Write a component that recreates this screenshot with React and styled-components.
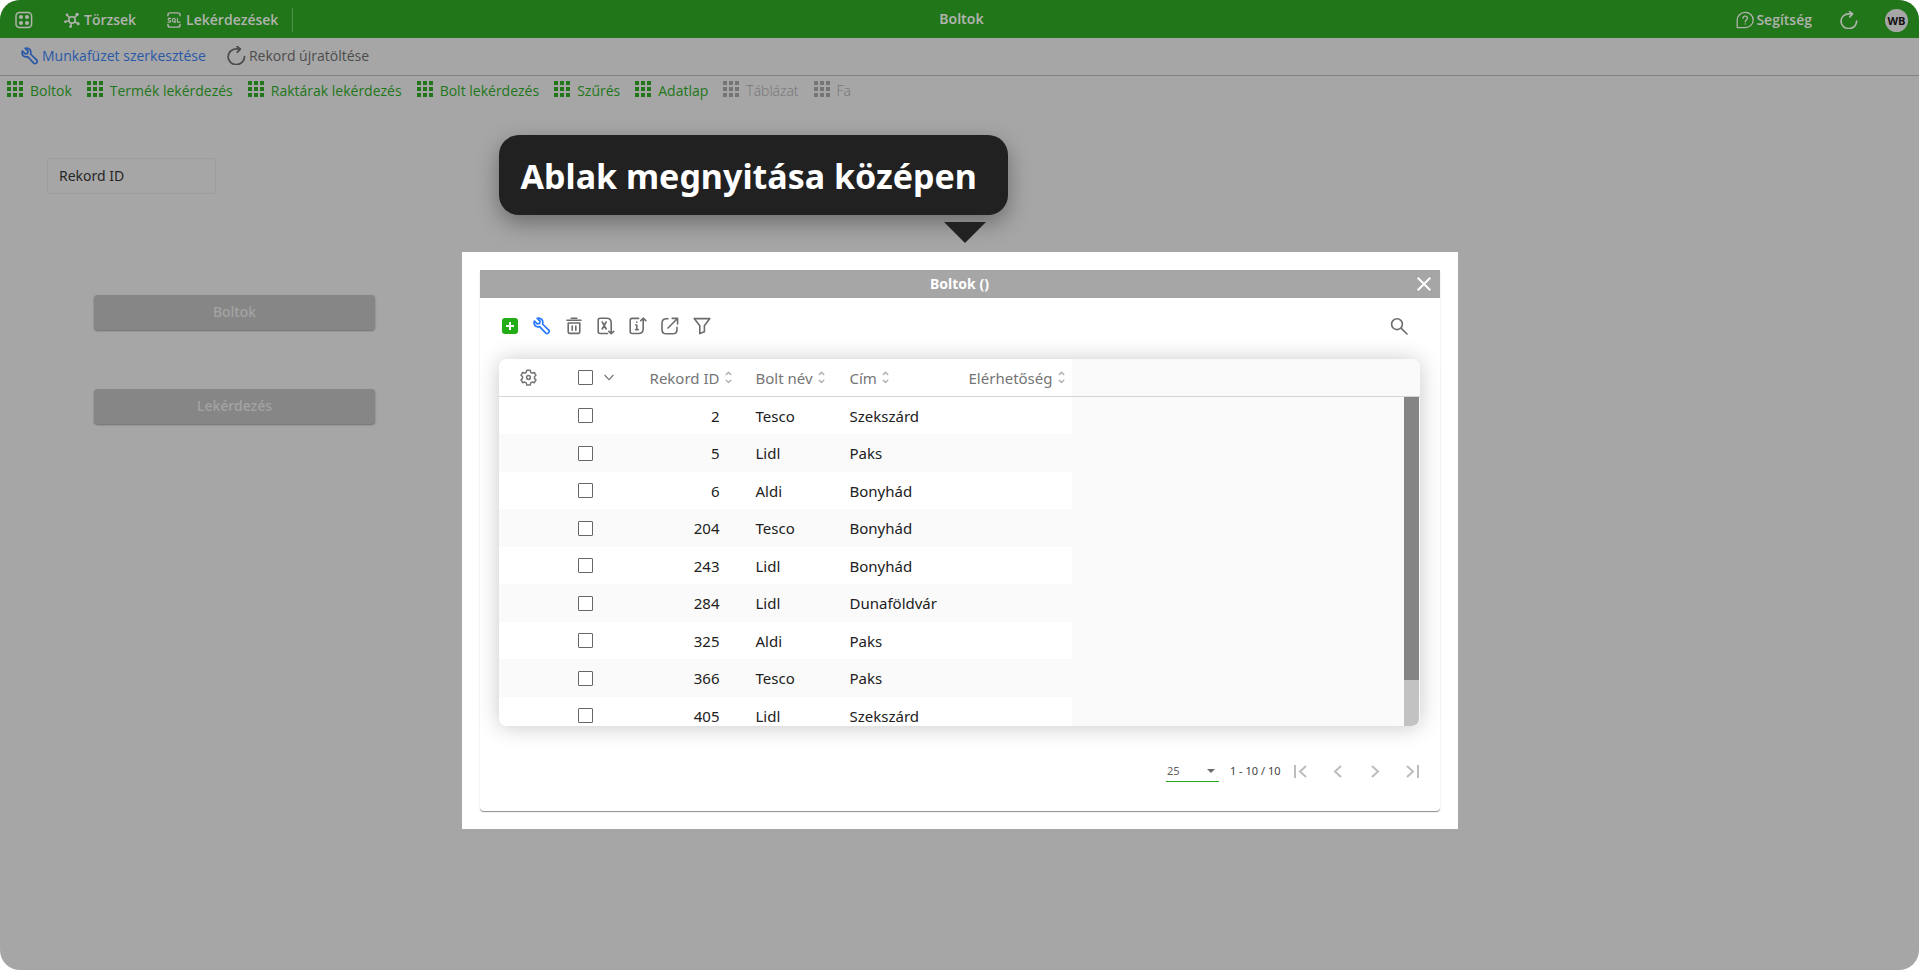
import React from "react";
import styled, { createGlobalStyle, css } from "styled-components";

const ui = '"Open Sans", "Noto Sans", sans-serif';
const rounded = '"Noto Sans", "Open Sans", sans-serif';

const GlobalStyle = createGlobalStyle`
  *, *::before, *::after { box-sizing: border-box; }
  body { margin: 0; background: #fff; font-family: ${ui}; }
  button, input, select { font-family: inherit; }
`;

const Page = styled.div`
  position: relative;
  min-height: 100vh;
  background: #a6a6a6;
  border-radius: 20px;
  overflow: hidden;
`;

const plainButton = css`
  display: flex;
  align-items: center;
  padding: 0;
  border: 0;
  background: none;
  cursor: pointer;
`;

/* ---------- top bar ---------- */

const TopBar = styled.header`
  display: grid;
  grid-template-columns: 1fr auto 1fr;
  align-items: center;
  height: 38px;
  padding: 0 11px 0 15px;
  background: #22761a;
  color: #b0b3ae;
`;

const TopGroup = styled.nav`
  display: flex;
  align-items: center;
  height: 38px;
  padding-top: 2px;
  justify-content: ${(p) => (p.$end ? "flex-end" : "flex-start")};
`;

const TopButton = styled.button`
  ${plainButton}
  gap: ${(p) => p.$gap || 4}px;
  margin-left: ${(p) => p.$space || 0}px;
  color: inherit;
  font-size: 14px;
  font-weight: 600;
  line-height: 20px;
  white-space: nowrap;
`;

const TopDivider = styled.span`
  width: 1px;
  height: 24px;
  margin-left: 14px;
  background: #4f9148;
`;

const PageTitle = styled.h1`
  margin: 0;
  font-family: ${rounded};
  font-size: 14px;
  font-weight: 600;
  line-height: 20px;
`;

const Avatar = styled.button`
  ${plainButton}
  justify-content: center;
  width: 23px;
  height: 23px;
  margin-left: 27px;
  border-radius: 50%;
  background: #a6a6a6;
  color: #111;
  font-size: 11px;
  font-weight: 700;
`;

/* ---------- action bar and tabs ---------- */

const ActionBar = styled.div`
  display: flex;
  align-items: center;
  gap: 21px;
  height: 38px;
  padding: 0 21px 2px;
  border-bottom: 1px solid #828282;
`;

const ActionButton = styled.button`
  ${plainButton}
  gap: 3px;
  color: ${(p) => p.$color};
  font-size: 14px;
  line-height: 20px;
`;

const Tabs = styled.nav`
  display: flex;
  gap: 15px;
  height: 32px;
  padding: 0 7px 3px;
`;

const Tab = styled.a`
  display: flex;
  align-items: center;
  gap: 7px;
  color: ${(p) => (p.$off ? "#757575" : "#22761a")};
  font-size: 14px;
  font-weight: ${(p) => (p.$off ? 300 : 400)};
  line-height: 20px;
  text-decoration: none;
  white-space: nowrap;
`;

/* ---------- form behind the dialog ---------- */

const Form = styled.main`
  display: flex;
  flex-direction: column;
  align-items: flex-start;
  padding: 50px 47px;
`;

const RecordInput = styled.input`
  width: 169px;
  height: 36px;
  margin-bottom: 101px;
  padding: 0 11px 2px;
  border: 1px solid #9c9c9c;
  border-radius: 4px;
  background: transparent;
  font-family: ${rounded};
  font-size: 14px;
  &::placeholder { color: #262626; opacity: 1; }
`;

const FormButton = styled.button`
  width: 281px;
  height: 35px;
  margin: 0 0 59px 47px;
  padding: 0 0 2px;
  border: 0;
  border-radius: 4px;
  background: #868686;
  box-shadow: 0 1px 2px rgba(0, 0, 0, 0.35);
  color: #a3a3a3;
  font-family: ${rounded};
  font-size: 14px;
  font-weight: 500;
`;

/* ---------- overlay ---------- */

const Overlay = styled.div`
  position: absolute;
  inset: 0;
  display: flex;
  flex-direction: column;
  align-items: center;
  padding-top: 135px;
`;

const Stack = styled.div`
  display: flex;
  flex-direction: column;
  width: 92%;
  max-width: 996px;
`;

const Callout = styled.div`
  align-self: flex-start;
  display: flex;
  align-items: center;
  height: 80px;
  margin-left: 37px;
  padding: 2px 31px 0 22px;
  border-radius: 20px;
  background: #212121;
  box-shadow: 0 8px 22px rgba(0, 0, 0, 0.35);
  color: #fff;
  font-family: ${rounded};
  font-size: 34px;
  font-weight: 700;
  line-height: 48px;
  white-space: nowrap;
`;

const Pointer = styled.svg`
  display: block;
  margin: 7px 0 9px 482px;
`;

const Frame = styled.div`
  padding: 18px;
  background: #fff;
`;

const Dialog = styled.section`
  border-radius: 0 0 4px 4px;
  background: #fff;
  box-shadow: 0 1px 1px rgba(0, 0, 0, 0.45);
  font-family: ${rounded};
`;

const DialogHeader = styled.header`
  display: grid;
  grid-template-columns: 1fr auto 1fr;
  align-items: center;
  height: 28px;
  padding: 0 9px;
  background: #a6a6a6;
  color: #fff;
`;

const DialogTitle = styled.h2`
  grid-column: 2;
  margin: 0;
  font-size: 14px;
  font-weight: 700;
  line-height: 20px;
`;

const IconButton = styled.button`
  ${plainButton}
  justify-content: center;
  color: ${(p) => p.$color || "#6c6c6c"};
`;

const CloseButton = styled(IconButton)`
  justify-self: end;
  color: #fff;
`;

const DialogBody = styled.div`
  padding: 17px 20px 0 19px;
`;

const Toolbar = styled.div`
  display: flex;
  align-items: center;
  gap: 10px;
  height: 22px;
  margin-bottom: 22px;
`;

const ToolButton = styled(IconButton)`
  width: 22px;
  height: 22px;
`;

const SearchButton = styled(ToolButton)`
  margin-left: auto;
  margin-right: 10px;
`;

/* ---------- record grid ---------- */

const GridCard = styled.div`
  position: relative;
  height: 367px;
  border-radius: 8px;
  background: #fafafa;
  box-shadow: 0 1px 22px rgba(0, 0, 0, 0.22);
  overflow: hidden;
`;

const Grid = styled.table`
  width: 100%;
  border-collapse: separate;
  border-spacing: 0;
  table-layout: fixed;
  color: #212121;
  font-size: 15px;
  line-height: 20px;
`;

const Col = styled.col`
  width: ${(p) => (p.$w ? `${p.$w}px` : "auto")};
`;

const HeadCell = styled.th`
  height: 38px;
  padding: 0 ${(p) => p.$right || 0}px 0 ${(p) => p.$left || 0}px;
  border-bottom: 1px solid #d6d6d6;
  background: ${(p) => (p.$blank ? "#fafafa" : "#fff")};
  color: #757575;
  font-weight: 400;
  text-align: ${(p) => p.$align || "left"};
  white-space: nowrap;
`;

const HeadLabel = styled.span`
  display: inline-flex;
  align-items: center;
  gap: 5px;
  vertical-align: middle;
`;

const Row = styled.tr`
  height: 37px;
  background: #fff;
  &:nth-child(even) { height: 38px; background: #fafafa; }
`;

const Cell = styled.td`
  padding: 0 ${(p) => p.$right || 0}px 0 ${(p) => p.$left || 0}px;
  background: ${(p) => (p.$blank ? "#fafafa" : "inherit")};
  text-align: ${(p) => p.$align || "left"};
`;

const Check = styled.input`
  appearance: none;
  display: block;
  width: 15px;
  height: 15px;
  margin: 0;
  border: 1px solid #666;
  border-radius: 1px;
  background: #fff;
`;

const CheckMenu = styled.span`
  display: flex;
  align-items: center;
  gap: 11px;
`;

const ScrollTrack = styled.div`
  position: absolute;
  top: 38px;
  right: 1px;
  bottom: 0;
  width: 15px;
  border-bottom-right-radius: 7px;
  background: #c2c2c2;
  overflow: hidden;
`;

const ScrollThumb = styled.div`
  height: 86%;
  background: #858585;
`;

/* ---------- pager ---------- */

const Pager = styled.footer`
  display: flex;
  align-items: center;
  justify-content: flex-end;
  height: 85px;
  padding-top: 5px;
  color: #444;
  font-size: 11px;
  line-height: 16px;
`;

const SizeBox = styled.label`
  display: flex;
  align-items: center;
  width: 53px;
  height: 22px;
  margin-right: 11px;
  border-bottom: 1px solid #22ac16;
  color: #6c6c6c;
`;

const SizeSelect = styled.select`
  appearance: none;
  flex: 1;
  min-width: 0;
  padding: 0 0 0 1px;
  border: 0;
  background: none;
  color: #616161;
  font-size: 11px;
`;

const PageButtons = styled.div`
  display: flex;
  gap: 13px;
  margin-left: 8px;
  margin-right: -4px;
`;

const PageButton = styled(IconButton)`
  color: #bdbdbd;
`;

/* ---------- icons ---------- */

const Icon = ({ size = 18, sw = 1.8, children, ...rest }) => (
  <svg width={size} height={size} viewBox="0 0 18 18" fill="none" stroke="currentColor"
    strokeWidth={sw} strokeLinecap="round" strokeLinejoin="round" aria-hidden="true" {...rest}>
    {children}
  </svg>
);

const AppsIcon = () => (
  <Icon sw={1.5}>
    <rect x="1" y="1.5" width="15.6" height="15" rx="3.5" />
    <g fill="currentColor" stroke="none">
      {[6, 12].map((x) => [6, 12].map((y) => <circle key={`${x}${y}`} cx={x} cy={y} r="2" />))}
    </g>
  </Icon>
);

const NodesIcon = () => (
  <Icon size={16} sw={1.7}>
    <circle cx="9" cy="9" r="3.6" />
    <path d="M6.3 6.4 3.6 3.6M11.6 6.4l2.6-2.6M5.4 10 2 10.8M12.2 11l3 1.7M8.3 12.8 7.6 16" />
    <g fill="currentColor" stroke="none">
      <circle cx="3.4" cy="3.2" r="1.5" /><circle cx="14.8" cy="2.6" r="1.8" />
      <circle cx="1.6" cy="11" r="1.5" /><circle cx="16" cy="13.2" r="1.7" /><circle cx="7.4" cy="16.4" r="1.5" />
    </g>
  </Icon>
);

const SqlIcon = () => (
  <Icon size={16} sw={1.6}>
    <path d="M2.2 4.2V3.4C2.2 1.8 3.2 1 4.8 1h8.4c1.6 0 2.6.8 2.6 2.4v.8M2.2 14v.6c0 1.6 1 2.4 2.6 2.4h8.4c1.6 0 2.6-.8 2.6-2.4V14" />
    <path strokeWidth="1.2" d="M5.4 7.2H3.6c-1.6 0-1.6 2 0 2h.5c1.6 0 1.6 2.2 0 2.2H2.2M8.9 7.2c-2.2 0-2.2 4.2 0 4.2s2.2-4.2 0-4.2M9.4 10.6l1.2 1.2M12.8 7v4.4h3" />
  </Icon>
);

const HelpIcon = () => (
  <Icon sw={1.3}>
    <path d="M1.2 16.6V9.2a8 7.6 0 1 1 8 7.4z" />
    <path d="M7 7.2c0-2.8 4.4-2.8 4.4 0 0 1.8-2.1 1.8-2.1 3.6M9.3 12.9v.1" />
  </Icon>
);

const ReloadIcon = ({ size = 18 }) => (
  <Icon size={size} sw={1.7}>
    <path d="M16.6 10A7.8 7.4 0 1 1 8.8 2.8h3M9.6.6l3 2.3-2.8 3" />
  </Icon>
);

const WrenchIcon = ({ size = 18, sw = 1.7 }) => (
  <Icon size={size} sw={sw}>
    <path d="M4.2 1.3 7 4.1 6.6 6.4 4.2 6.8 1.4 4C.6 6.6 1.6 9.2 4 9.8c1 .3 1.8.1 2.6-.2l6.2 6.5c1.5 1.5 4.6-1.2 3-2.9L9.5 7C10.8 3.4 7.8.3 4.2 1.3z" />
  </Icon>
);

const TilesIcon = () => (
  <svg width="16" height="20" viewBox="0 0 16 20" fill="currentColor" aria-hidden="true">
    {[0, 6, 12].map((x) => [0, 6, 12].map((y) => <rect key={`${x}-${y}`} x={x} y={y} width="4" height="4" />))}
  </svg>
);

const AddIcon = () => (
  <svg width="18" height="18" viewBox="0 0 18 18" aria-hidden="true">
    <rect x="1" y="1" width="16" height="16" rx="3" fill="#22ac16" />
    <path d="M9 5v8M5 9h8" stroke="#fff" strokeWidth="2" />
  </svg>
);

const TrashIcon = () => (
  <Icon sw={1.6}>
    <path d="M2 3.2h14M6.2 1.2h5.6M3.2 6h11.6v8.4c0 1.4-.6 2-2 2H5.2c-1.4 0-2-.6-2-2zM7.2 9v4.2M10.8 9v4.2" />
  </Icon>
);

const ExcelIcon = () => (
  <Icon sw={1.6}>
    <path d="M10.5 16.5H3.2c-1.4 0-2-.6-2-2V3.2c0-1.4.6-2 2-2h6.4c2.8 0 4.6 1.8 4.6 4.6v10.7M11.8 14.4l2.4 2.2 2.6-2.2M5.2 5l4 7M9.2 5l-4 7" />
  </Icon>
);

const InfoIcon = () => (
  <Icon sw={1.6}>
    <path d="M9.6 1.4H3.2c-1.4 0-2 .6-2 2v11.1c0 1.4.6 2 2 2h6.2c3 0 4.8-1.8 4.8-4.8V1.6M11.8 3.6l2.4-2.4 2.6 2.4M7.8 8v4.6M6.6 12.6h2.6M6.8 8h1M7.8 5v.2" />
  </Icon>
);

const ExportIcon = () => (
  <Icon sw={1.6}>
    <path d="M7 1.8H5.4C2.8 1.8 1 3.6 1 6.2v6.2c0 2.6 1.8 4.4 4.4 4.4h6.2c2.6 0 4.4-1.8 4.4-4.4v-2M11.2 1.4h5.4V7M16.2 1.8 7 11" />
  </Icon>
);

const FunnelIcon = () => (
  <Icon sw={1.6}>
    <path d="M1.2 1.6h15.6l-5.4 7.2v6l-4.6 1.8V8.8z" />
  </Icon>
);

const SearchIcon = () => (
  <Icon sw={1.6}>
    <circle cx="7" cy="7.2" r="5.4" />
    <path d="m11 11.2 6 5.8" />
  </Icon>
);

const GearIcon = () => (
  <Icon size={17} sw={1.6}>
    <path d="M7.2 1.2h3.6l.6 2.3 1.5.9 2.3-.7 1.7 3-1.6 1.6v1.6l1.6 1.6-1.7 3-2.3-.7-1.5.9-.6 2.2H7.2l-.6-2.2-1.5-.9-2.3.7-1.7-3 1.6-1.6V8.3L1.1 6.7l1.7-3 2.3.7 1.5-.9z" />
    <circle cx="9" cy="9" r="2" />
  </Icon>
);

const ChevronIcon = () => (
  <svg width="10" height="7" viewBox="0 0 10 7" fill="none" stroke="#757575" strokeWidth="1.2" aria-hidden="true">
    <path d="m.6 1 4.4 4.6L9.4 1" />
  </svg>
);

const SortIcon = () => (
  <svg width="7" height="15" viewBox="0 0 7 15" fill="none" stroke="#b5b5b5" strokeWidth="1.6" aria-hidden="true">
    <path d="M.8 3.8 3.5 1.4l2.7 2.4M.8 9l2.7 2.4L6.2 9" />
  </svg>
);

const CloseIcon = () => (
  <svg width="14" height="14" viewBox="0 0 14 14" stroke="currentColor" strokeWidth="2" aria-hidden="true">
    <path d="m.7.7 12.6 12.6M13.3.7.7 13.3" />
  </svg>
);

const CaretIcon = () => (
  <svg width="16" height="6" viewBox="0 0 16 6" aria-hidden="true">
    <path d="M4 1h8L8 5z" fill="#6c6c6c" />
  </svg>
);

const pagePaths = {
  "Első oldal": "M6 6v13M17 7l-6 5.5 6 5.5",
  "Előző oldal": "M15 7l-6 5.5 6 5.5",
  "Következő oldal": "M9 7l6 5.5-6 5.5",
  "Utolsó oldal": "M7 7l6 5.5-6 5.5M18 6v13",
};

/* ---------- data ---------- */

const tabs = [
  ["Boltok"], ["Termék lekérdezés"], ["Raktárak lekérdezés"], ["Bolt lekérdezés"],
  ["Szűrés"], ["Adatlap"], ["Táblázat", true], ["Fa", true],
];

const tools = [
  ["Új rekord", AddIcon], ["Szerkesztés", WrenchIcon, "#2979ff"], ["Törlés", TrashIcon],
  ["Excel export", ExcelIcon], ["Információ", InfoIcon], ["Megnyitás", ExportIcon], ["Szűrő", FunnelIcon],
];

const records = [
  [2, "Tesco", "Szekszárd"], [5, "Lidl", "Paks"], [6, "Aldi", "Bonyhád"],
  [204, "Tesco", "Bonyhád"], [243, "Lidl", "Bonyhád"], [284, "Lidl", "Dunaföldvár"],
  [325, "Aldi", "Paks"], [366, "Tesco", "Paks"], [405, "Lidl", "Szekszárd"],
];

const SortHead = ({ children, ...rest }) => (
  <HeadCell scope="col" {...rest}>
    <HeadLabel>{children}<SortIcon /></HeadLabel>
  </HeadCell>
);

function RecordGrid() {
  return (
    <GridCard>
      <Grid>
        <colgroup>
          <Col $w={60} /><Col $w={82} /><Col $w={100} /><Col $w={94} /><Col $w={122} /><Col $w={115} /><Col />
        </colgroup>
        <thead>
          <tr>
            <HeadCell $left={21}>
              <IconButton aria-label="Beállítások" $color="#757575"><GearIcon /></IconButton>
            </HeadCell>
            <HeadCell $left={19}>
              <CheckMenu>
                <Check type="checkbox" aria-label="Összes kijelölése" />
                <IconButton aria-label="Kijelölés menü"><ChevronIcon /></IconButton>
              </CheckMenu>
            </HeadCell>
            <SortHead $align="right" $right={9}>Rekord ID</SortHead>
            <SortHead $left={15}>Bolt név</SortHead>
            <SortHead $left={15}>Cím</SortHead>
            <SortHead $align="right" $right={7}>Elérhetőség</SortHead>
            <HeadCell as="td" $blank />
          </tr>
        </thead>
        <tbody>
          {records.map(([id, name, city]) => (
            <Row key={id}>
              <Cell />
              <Cell $left={19}><Check type="checkbox" aria-label={`Rekord ${id}`} /></Cell>
              <Cell $align="right" $right={21}>{id}</Cell>
              <Cell $left={15}>{name}</Cell>
              <Cell $left={15}>{city}</Cell>
              <Cell />
              <Cell $blank />
            </Row>
          ))}
        </tbody>
      </Grid>
      <ScrollTrack><ScrollThumb /></ScrollTrack>
    </GridCard>
  );
}

export default function App() {
  return (
    <Page>
      <GlobalStyle />
      <TopBar>
        <TopGroup>
          <TopButton aria-label="Alkalmazások"><AppsIcon /></TopButton>
          <TopButton $space={31}><NodesIcon />Törzsek</TopButton>
          <TopButton $space={30}><SqlIcon />Lekérdezések</TopButton>
          <TopDivider />
        </TopGroup>
        <PageTitle>Boltok</PageTitle>
        <TopGroup $end>
          <TopButton $gap={2}><HelpIcon />Segítség</TopButton>
          <TopButton $space={28} aria-label="Frissítés"><ReloadIcon /></TopButton>
          <Avatar>WB</Avatar>
        </TopGroup>
      </TopBar>
      <ActionBar>
        <ActionButton $color="#2958a8"><WrenchIcon />Munkafüzet szerkesztése</ActionButton>
        <ActionButton $color="#4c4c4c"><ReloadIcon size={19} />Rekord újratöltése</ActionButton>
      </ActionBar>
      <Tabs>
        {tabs.map(([label, off]) => (
          <Tab key={label} href="#" $off={off}><TilesIcon />{label}</Tab>
        ))}
      </Tabs>
      <Form>
        <RecordInput placeholder="Rekord ID" aria-label="Rekord ID" />
        <FormButton>Boltok</FormButton>
        <FormButton>Lekérdezés</FormButton>
      </Form>

      <Overlay>
        <Stack>
          <Callout>Ablak megnyitása középen</Callout>
          <Pointer width="42" height="21" viewBox="0 0 42 21" aria-hidden="true">
            <path d="M0 0h42L21 21z" fill="#212121" />
          </Pointer>
          <Frame>
            <Dialog role="dialog" aria-labelledby="dialog-title">
              <DialogHeader>
                <DialogTitle id="dialog-title">Boltok ()</DialogTitle>
                <CloseButton aria-label="Bezárás"><CloseIcon /></CloseButton>
              </DialogHeader>
              <DialogBody>
                <Toolbar>
                  {tools.map(([label, Glyph, color]) => (
                    <ToolButton key={label} aria-label={label} $color={color}><Glyph /></ToolButton>
                  ))}
                  <SearchButton aria-label="Keresés"><SearchIcon /></SearchButton>
                </Toolbar>
                <RecordGrid />
                <Pager>
                  <SizeBox>
                    <SizeSelect aria-label="Sorok száma" defaultValue="25">
                      <option>25</option>
                    </SizeSelect>
                    <CaretIcon />
                  </SizeBox>
                  <span>1 - 10 / 10</span>
                  <PageButtons>
                    {Object.entries(pagePaths).map(([label, d]) => (
                      <PageButton key={label} aria-label={label}>
                        <svg width="24" height="24" viewBox="0 0 24 24" fill="none" stroke="currentColor" strokeWidth="2" aria-hidden="true">
                          <path d={d} />
                        </svg>
                      </PageButton>
                    ))}
                  </PageButtons>
                </Pager>
              </DialogBody>
            </Dialog>
          </Frame>
        </Stack>
      </Overlay>
    </Page>
  );
}
